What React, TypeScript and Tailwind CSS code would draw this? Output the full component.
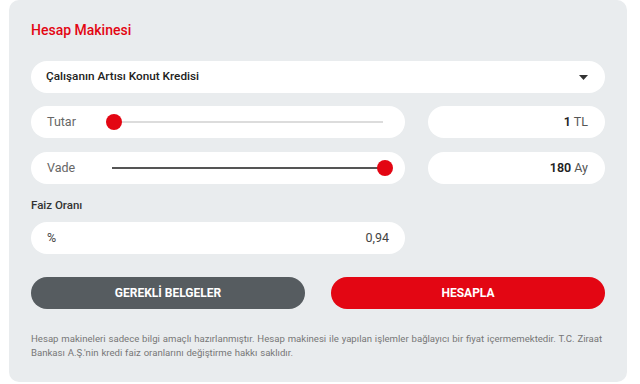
import { useState } from 'react';

export default function App() {
    const [tutar] = useState(1);
    const [vade] = useState(180);

    return (
        <div className="w-[640px] h-[384px] bg-white pl-[9px] pr-[13px] pb-[2px]" style={{ fontFamily: 'Roboto, "Noto Sans", sans-serif' }}>
            <div className="h-full bg-[#e9ecee] rounded-[10px] px-[22px] pt-[21px]">
                {/* Title */}
                <h1 className="text-[14px] font-medium text-[#e30613] leading-[18px]">Hesap Makinesi</h1>

                {/* Product select */}
                <div className="mt-[22px] h-[32px] bg-white rounded-full flex items-center justify-between pl-[15px] pr-[17px]">
                    <span className="text-[11.75px] font-medium text-[#222]">Çalışanın Artısı Konut Kredisi</span>
                    <svg width="9" height="5" viewBox="0 0 9 5"><path d="M0 0h9L4.5 5z" fill="#333" /></svg>
                </div>

                {/* Tutar */}
                <div className="mt-[13px] flex gap-[23px]">
                    <div className="w-[374px] h-[32px] bg-white rounded-full flex items-center pl-[16px] pr-[22px]">
                        <span className="w-[60px] text-[12.5px] text-[#666]">Tutar</span>
                        <div className="relative flex-1 h-[2px] bg-[#dcdcdc] ml-[7px]">
                            <div className="absolute left-[-8px] top-[-7px] w-[16px] h-[16px] rounded-full bg-[#e30613]" />
                        </div>
                    </div>
                    <div className="flex-1 h-[32px] bg-white rounded-full flex items-center justify-end pr-[17px] text-[12.5px]">
                        <span className="font-semibold text-[#222]">{tutar}</span>
                        <span className="ml-[3px] text-[#555]">TL</span>
                    </div>
                </div>

                {/* Vade */}
                <div className="mt-[14px] flex gap-[23px]">
                    <div className="w-[374px] h-[32px] bg-white rounded-full flex items-center pl-[16px] pr-[20px]">
                        <span className="w-[65px] text-[12.5px] text-[#666]">Vade</span>
                        <div className="relative flex-1 h-[2px] bg-[#555]">
                            <div className="absolute right-[-8px] top-[-7px] w-[16px] h-[16px] rounded-full bg-[#e30613]" />
                        </div>
                    </div>
                    <div className="flex-1 h-[32px] bg-white rounded-full flex items-center justify-end pr-[17px] text-[12.5px]">
                        <span className="font-semibold text-[#222]">{vade}</span>
                        <span className="ml-[3px] text-[#555]">Ay</span>
                    </div>
                </div>

                {/* Faiz */}
                <div className="mt-[14px] text-[11.5px] font-medium text-[#333] leading-[14px]">Faiz Oranı</div>
                <div className="mt-[10px] w-[374px] h-[32px] bg-white rounded-full flex items-center justify-between pl-[16px] pr-[16px] text-[12.5px] text-[#444]">
                    <span>%</span>
                    <span>0,94</span>
                </div>

                {/* Buttons */}
                <div className="mt-[23px] flex gap-[26px]">
                    <button className="w-[274px] h-[32px] rounded-full bg-[#565c60] text-white text-[12px] font-bold">GEREKLİ BELGELER</button>
                    <button className="flex-1 h-[32px] rounded-full bg-[#e30613] text-white text-[12px] font-bold">HESAPLA</button>
                </div>

                {/* Disclaimer */}
                <p className="mt-[23px] text-[9.6px] [word-spacing:0.5px] leading-[14px] text-[#777] whitespace-nowrap">
                    Hesap makineleri sadece bilgi amaçlı hazırlanmıştır. Hesap makinesi ile yapılan işlemler bağlayıcı bir fiyat içermemektedir. T.C. Ziraat
                    <br />
                    Bankası A.Ş.'nin kredi faiz oranlarını değiştirme hakkı saklıdır.
                </p>
            </div>
        </div>
    );
}
